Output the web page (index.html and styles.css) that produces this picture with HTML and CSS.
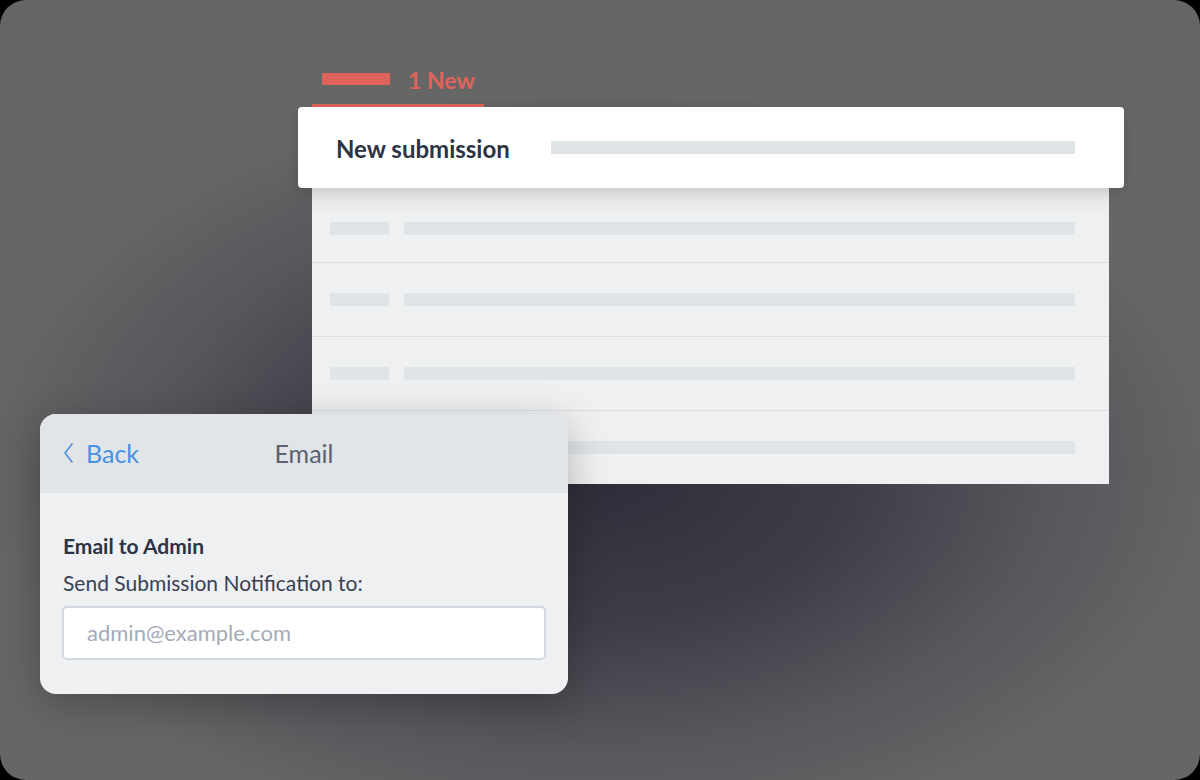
FILE: index.html
```html
<!DOCTYPE html>
<html lang="en">
<head>
    <meta charset="UTF-8">
    <title>Submission notification</title>
    <link rel="stylesheet" href="styles.css">
</head>
<body>
    <div class="frame">
        <div class="board">
            <div class="tab">
                <span class="tab-bar"></span>
                <span class="tab-label">1 New</span>
            </div>
            <div class="head-card">
                <span class="head-title">New submission</span>
                <span class="ph ph-head"></span>
            </div>
            <div class="list">
                <div class="row"><span class="ph ph-short"></span><span class="ph ph-long"></span></div>
                <div class="row"><span class="ph ph-short"></span><span class="ph ph-long"></span></div>
                <div class="row"><span class="ph ph-short"></span><span class="ph ph-long"></span></div>
                <div class="row"><span class="ph ph-short"></span><span class="ph ph-long"></span></div>
            </div>
        </div>

        <!-- panel de email sobre la lista -->
        <div class="email-card">
            <div class="email-head">
                <span class="back">
                    <svg width="14" height="22" viewBox="0 0 14 22"><path d="M10 2 L3 11 L10 20" fill="none" stroke="#4a90e2" stroke-width="1.6" stroke-linecap="round" stroke-linejoin="round"/></svg>
                    Back
                </span>
                <span class="email-title">Email</span>
            </div>
            <div class="email-body">
                <div class="field-title">Email to Admin</div>
                <div class="field-label">Send Submission Notification to:</div>
                <div class="field-input">admin@example.com</div>
            </div>
        </div>
    </div>
</body>
</html>
```

FILE: styles.css
```css
body {
    margin: 0;
    background: #000;
    font-family: Lato, "Open Sans", sans-serif;
}
.frame {
    position: relative;
    width: 1200px;
    height: 780px;
    border-radius: 26px;
    overflow: hidden;
    background: radial-gradient(ellipse 620px 380px at 600px 470px, #2e2c39 0%, #3e3d47 40%, #56565c 72%, #666666 100%);
}
.board {
    margin-left: 298px;
    padding-top: 73px;
    width: 826px;
}
.tab {
    display: flex;
    align-items: center;
    gap: 18px;
    margin-left: 14px;
    width: 172px;
    padding: 0 0 0 10px;
    height: 34px;
    box-sizing: border-box;
    border-bottom: 3px solid #e0635b;
}
.tab-bar {
    width: 68px;
    height: 12px;
    background: #e0635b;
    margin-top: -19px;
}
.tab-label {
    color: #e0635b;
    font-weight: 700;
    font-size: 23px;
    margin-top: -17px;
}
.head-card {
    position: relative;
    z-index: 2;
    display: flex;
    align-items: center;
    height: 81px;
    padding: 0 49px 0 38px;
    background: #fff;
    border-radius: 4px;
    box-shadow: 0 4px 14px rgba(0, 0, 0, 0.12);
}
.head-title {
    font-size: 24px;
    font-weight: 700;
    color: #2c3345;
    width: 215px;
    margin-top: 2px;
}
.ph {
    display: block;
    height: 13px;
    background: #dfe5e6;
}
.ph-head {
    flex: 1;
}
.list {
    margin: 0 15px 0 14px;
    background: #eff0f2;
}
.row {
    display: flex;
    align-items: center;
    gap: 15px;
    height: 73px;
    padding: 0 34px 0 18px;
    border-bottom: 1px solid #dcdee2;
}
.row:first-child {
    height: 75px;
    padding-top: 6px;
    box-sizing: border-box;
    background: linear-gradient(#e3e4e6, #eff0f2 30px);
}
.row:last-child {
    border-bottom: none;
}
.ph-short {
    width: 59px;
}
.ph-long {
    flex: 1;
}
.email-card {
    position: absolute;
    left: 40px;
    top: 414px;
    width: 528px;
    height: 280px;
    border-radius: 16px;
    overflow: hidden;
    background: #eff0f2;
    box-shadow: 0 10px 40px rgba(0, 0, 0, 0.25);
}
.email-head {
    position: relative;
    display: flex;
    align-items: center;
    justify-content: center;
    height: 79px;
    background: #e1e5e8;
}
.back {
    position: absolute;
    left: 22px;
    top: 24px;
    display: flex;
    align-items: center;
    gap: 10px;
    color: #4a90e2;
    font-size: 25px;
}
.email-title {
    color: #5a6170;
    font-size: 25px;
    margin-top: -2px;
}
.email-body {
    padding: 40px 22px 0 22px;
}
.field-title {
    font-size: 21px;
    font-weight: 700;
    color: #2c3345;
    margin-left: 1px;
}
.field-label {
    margin: 12px 0 11px 1px;
    font-size: 21px;
    color: #3a4152;
}
.field-input {
    box-sizing: border-box;
    height: 54px;
    line-height: 50px;
    padding: 0 23px;
    background: #fff;
    border: 2px solid #d3d7e4;
    border-radius: 5px;
    font-size: 22px;
    color: #a3aab8;
}
```
